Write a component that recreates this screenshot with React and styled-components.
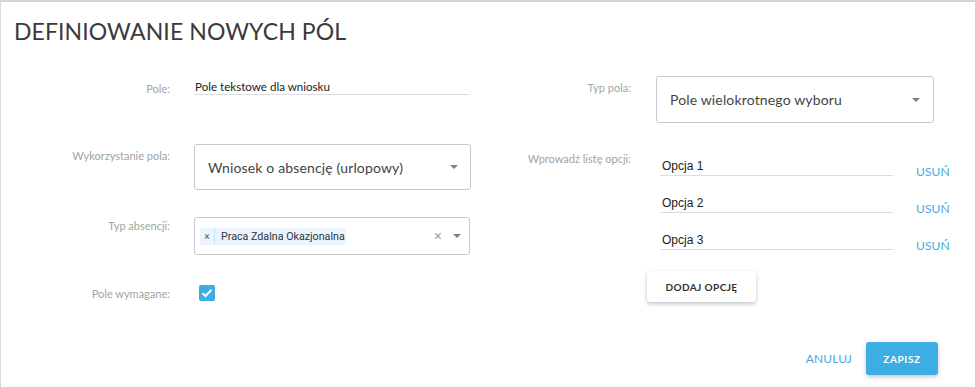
import React from "react";
import styled, { createGlobalStyle } from "styled-components";

const Global = createGlobalStyle`
  html, body { margin: 0; padding: 0; background: #fff; }
  body { font-family: Lato, "Noto Sans", sans-serif; }
  * { box-sizing: border-box; }
`;

const Card = styled.div`
  width: 975px;
  height: 387px;
  background: #fff;
  border-top: 2px solid #d4d4d4;
  border-left: 1px solid #d8d8d8;
  display: flex;
  flex-direction: column;
`;

const Title = styled.h1`
  margin: 0;
  padding: 15px 0 0 13px;
  height: 76px;
  font-family: Lato, sans-serif;
  font-weight: 400;
  font-size: 23px;
  color: #3a3a3a;
  letter-spacing: 0.1px;
`;

const Columns = styled.div`
  display: flex;
`;

const Column = styled.div`
  display: flex;
  flex-direction: column;
  width: ${(p) => p.$width}px;
`;

const Row = styled.div`
  display: grid;
  grid-template-columns: ${(p) => p.$label}px ${(p) => p.$field}px;
  column-gap: ${(p) => p.$gap}px;
  align-items: start;
  margin-top: ${(p) => p.$top || 0}px;
`;

const Label = styled.div`
  text-align: right;
  font-family: Lato, sans-serif;
  font-size: 11px;
  color: #a3a3a3;
  padding-top: ${(p) => p.$pad || 0}px;
  white-space: nowrap;
`;

const TextInput = styled.div`
  font-family: Lato, sans-serif;
  font-size: 11.6px;
  color: #222;
  border-bottom: 1px solid #dcdcdc;
  height: 14px;
  line-height: 12px;
  margin-left: 1px;
  width: 274px;
`;

const SelectBox = styled.div`
  height: ${(p) => p.$height}px;
  width: ${(p) => p.$w}px;
  border: 1px solid #c9c9c9;
  border-radius: 3px;
  display: flex;
  align-items: center;
  padding: 0 ${(p) => p.$pr || 13}px 0 13px;
  gap: 8px;
`;

const SelectValue = styled.span`
  flex: 1;
  font-family: Lato, sans-serif;
  font-size: 14px;
  letter-spacing: 0.15px;
  color: #444;
`;

const Caret = styled.span`
  width: 0;
  height: 0;
  border-left: 4.5px solid transparent;
  border-right: 4.5px solid transparent;
  border-top: 4.5px solid #808080;
`;

const Chip = styled.span`
  display: flex;
  align-items: center;
  height: 17px;
  background: #ebf5ff;
  font-family: Roboto, "Liberation Sans", Arial, sans-serif;
  font-size: 10.7px;
  color: #333;
  margin-left: -8px;
`;

const ChipRemove = styled.span`
  width: 15px;
  text-align: center;
  font-size: 10px;
  color: #555;
  border-right: 1px solid #c2e0ff;
  height: 100%;
  line-height: 17px;
`;

const ChipText = styled.span`
  padding: 0 1px 0 6px;
`;

const Spacer = styled.span`
  flex: 1;
`;

const Clear = styled.span`
  font-family: "Liberation Sans", Arial, sans-serif;
  font-size: 14px;
  color: #999;
  margin-right: 3px;
`;

const Check = styled.div`
  width: 16px;
  height: 16px;
  margin-left: 5px;
  background: #3daee3;
  border-radius: 2px;
  display: flex;
  align-items: center;
  justify-content: center;
`;

const Options = styled.div`
  display: flex;
  flex-direction: column;
  gap: 21px;
  padding-top: 8px;
  padding-left: 4px;
`;

const OptionRow = styled.div`
  display: flex;
  align-items: flex-end;
`;

const OptionInput = styled.div`
  width: 233px;
  height: 16px;
  border-bottom: 1px solid #dcdcdc;
  font-family: "Liberation Sans", Arial, sans-serif;
  font-size: 12px;
  line-height: 13px;
  color: #222;
  padding-left: 2px;
`;

const LinkButton = styled.span`
  font-family: Lato, sans-serif;
  font-size: 12px;
  color: #4aa8dc;
  letter-spacing: 0.1px;
  margin-left: ${(p) => p.$ml || 0}px;
  transform: translateY(${(p) => p.$dy || 0}px);
`;

const AddButton = styled.button`
  align-self: flex-start;
  margin-left: -13px;
  margin-top: 0px;
  width: 109px;
  height: 31px;
  border: none;
  border-radius: 3px;
  background: #fff;
  box-shadow: 0 2px 4px rgba(0, 0, 0, 0.22), 0 0 1px rgba(0,0,0,0.15);
  font-family: Lato, sans-serif;
  font-weight: 700;
  font-size: 10px;
  letter-spacing: 0.4px;
  color: #333;
`;

const Footer = styled.div`
  display: flex;
  justify-content: flex-end;
  align-items: center;
  gap: 14px;
  padding-right: 37px;
  margin-top: 40px;
`;

const PrimaryButton = styled.button`
  width: 72px;
  height: 33px;
  border: none;
  border-radius: 3px;
  background: #3daee3;
  box-shadow: 0 2px 4px rgba(0, 0, 0, 0.22);
  color: #fff;
  font-family: Lato, sans-serif;
  font-weight: 700;
  font-size: 10px;
  letter-spacing: 0.6px;
`;

export default function App() {
  return (
    <>
      <Global />
      <Card>
        <Title>DEFINIOWANIE NOWYCH PÓL</Title>
        <Columns>
          <Column $width={480}>
            <Row $label={169} $field={276} $gap={24} $top={3}>
              <Label $pad={1}>Pole:</Label>
              <TextInput>Pole tekstowe dla wniosku</TextInput>
            </Row>
            <Row $label={169} $field={277} $gap={24} $top={49}>
              <Label $pad={5}>Wykorzystanie pola:</Label>
              <SelectBox $height={46} $w={277} $pr={12}>
                <SelectValue>Wniosek o absencję (urlopowy)</SelectValue>
                <Caret />
              </SelectBox>
            </Row>
            <Row $label={169} $field={277} $gap={24} $top={27}>
              <Label $pad={2}>Typ absencji:</Label>
              <SelectBox $height={38} $w={276} $pr={8}>
                <Chip>
                  <ChipRemove>×</ChipRemove>
                  <ChipText>Praca Zdalna Okazjonalna</ChipText>
                </Chip>
                <Spacer />
                <Clear>×</Clear>
                <Caret />
              </SelectBox>
            </Row>
            <Row $label={169} $field={277} $gap={24} $top={30}>
              <Label $pad={2}>Pole wymagane:</Label>
              <Check>
                <svg width="12" height="10" viewBox="0 0 12 10">
                  <path d="M1.5 5.2 L4.5 8 L10.5 1.8" fill="none" stroke="#fff" strokeWidth="2" />
                </svg>
              </Check>
            </Row>
          </Column>
          <Column $width={494}>
            <Row $label={150} $field={278} $gap={25} $top={-2}>
              <Label $pad={5}>Typ pola:</Label>
              <SelectBox $height={47} $w={278} $pr={13}>
                <SelectValue>Pole wielokrotnego wyboru</SelectValue>
                <Caret />
              </SelectBox>
            </Row>
            <Row $label={150} $field={300} $gap={25} $top={29}>
              <Label $pad={0}>Wprowadź listę opcji:</Label>
              <Options>
                {["Opcja 1", "Opcja 2", "Opcja 3"].map((o) => (
                  <OptionRow key={o}>
                    <OptionInput>{o}</OptionInput>
                    <LinkButton $ml={23} $dy={3}>USUŃ</LinkButton>
                  </OptionRow>
                ))}
                <AddButton>DODAJ OPCJĘ</AddButton>
              </Options>
            </Row>
          </Column>
        </Columns>
        <Footer>
          <LinkButton>ANULUJ</LinkButton>
          <PrimaryButton>ZAPISZ</PrimaryButton>
        </Footer>
      </Card>
    </>
  );
}
